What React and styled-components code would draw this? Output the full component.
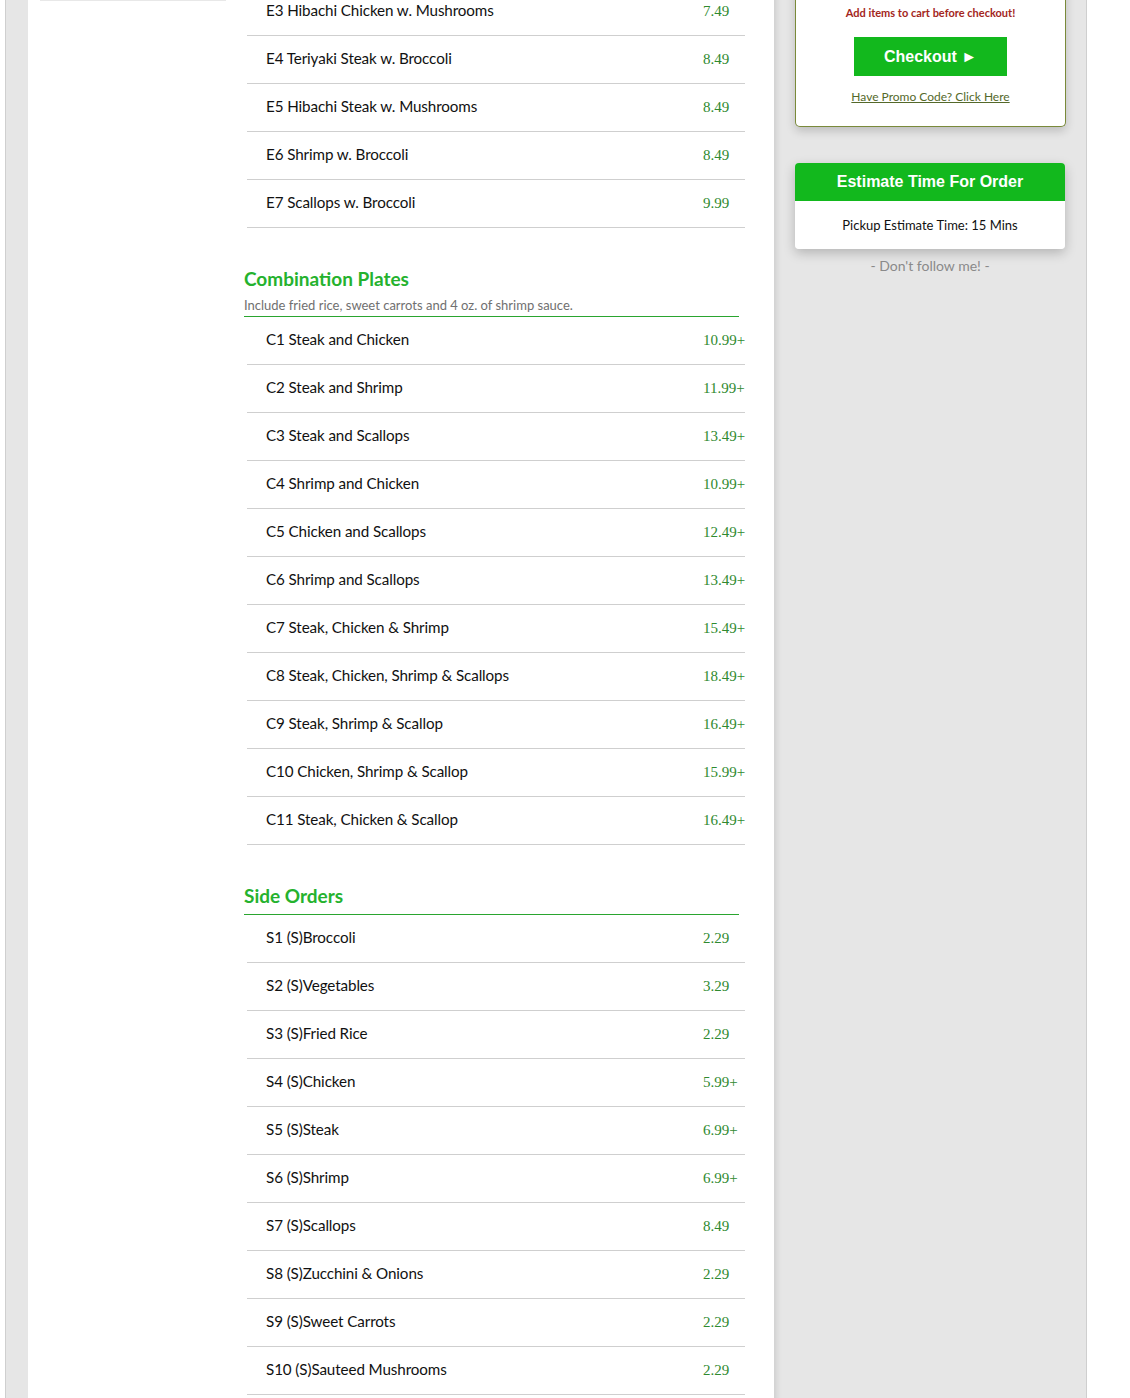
import React from "react";
import styled, { createGlobalStyle } from "styled-components";

const GlobalStyle = createGlobalStyle`
  html, body { margin: 0; padding: 0; background: #fff; }
  body { font-family: "Open Sans", "Liberation Sans", sans-serif; }
`;

const S = {
  Frame: styled.div`
    display: flex;
    width: 1082px;
    margin: -12px 0 0 5px;
    background: #e6e6e6;
    border-left: 1px solid #cfcfcf;
    border-right: 1px solid #cfcfcf;
    padding-left: 22px;
    box-sizing: border-box;
    min-height: 1430px;
  `,
  Main: styled.div`
    display: flex;
    width: 746px;
    background: #fff;
    padding-left: 12px;
    box-sizing: border-box;
  `,
  Sidebar: styled.div`
    width: 186px;
    margin-right: 18px;
  `,
  SideBlock: styled.div`
    height: 11px;
    border-bottom: 2px solid #e8e8e8;
  `,
  Menu: styled.div`
    width: 501px;
  `,
  Section: styled.div`
    margin-top: ${(p) => (p.$first ? "0" : "28px")};
  `,
  Heading: styled.div`
    font-family: "Lato", "Liberation Sans", sans-serif;
    font-weight: 700;
    font-size: 19px;
    color: #25b22e;
    line-height: 26px;
    padding-top: 10px;
  `,
  Note: styled.div`
    font-family: "Lato", "Liberation Sans", sans-serif;
    font-size: 13px;
    color: #707070;
    line-height: 18px;
    margin-top: 4px;
  `,
  Rule: styled.div`
    width: 495px;
    height: 1px;
    background: #2aa52f;
    margin-top: ${(p) => (p.$withNote ? "2px" : "5px")};
  `,
  Row: styled.div`
    display: flex;
    align-items: center;
    height: 47px;
    margin-left: 3px;
    width: 498px;
    border-bottom: 1px solid #cfcfcf;
    box-sizing: content-box;
  `,
  Name: styled.div`
    flex: 1;
    padding-left: 19px;
    padding-bottom: 3px;
    font-family: "Lato", "Liberation Sans", sans-serif;
    font-size: 15.2px;
    color: #111;
    letter-spacing: -0.1px;
  `,
  Price: styled.div`
    width: 42px;
    padding-bottom: 1px;
    font-family: "Liberation Serif", "Times New Roman", serif;
    font-size: 15px;
    color: #2f8a2f;
  `,
  Side: styled.div`
    width: 312px;
    padding-left: 21px;
    box-sizing: border-box;
    box-shadow: inset 6px 0 6px -4px rgba(0, 0, 0, 0.12);
  `,
  CartCard: styled.div`
    width: 271px;
    box-sizing: border-box;
    background: #fff;
    border: 1px solid #7a8a3a;
    border-top: none;
    border-radius: 0 0 5px 5px;
    box-shadow: 0 4px 10px rgba(0, 0, 0, 0.18);
    padding: 17px 0 21px;
    display: flex;
    flex-direction: column;
    align-items: center;
  `,
  Warn: styled.div`
    font-family: "Lato", "Liberation Sans", sans-serif;
    font-size: 11px;
    font-weight: 700;
    color: #a3261c;
    line-height: 16px;
  `,
  CheckoutButton: styled.button`
    margin-top: 16px;
    width: 153px;
    height: 39px;
    border: none;
    background: #12b81d;
    color: #fff;
    font-family: "Liberation Sans", Arial, sans-serif;
    font-weight: 700;
    font-size: 16px;
    cursor: pointer;
  `,
  Promo: styled.a`
    margin-top: 13px;
    font-family: "Lato", "Liberation Sans", sans-serif;
    font-size: 12px;
    color: #54692a;
    text-decoration: underline;
    line-height: 16px;
  `,
  TimeCard: styled.div`
    margin-top: 36px;
    width: 270px;
    border-radius: 4px;
    overflow: hidden;
    box-shadow: 0 4px 12px rgba(0, 0, 0, 0.22);
  `,
  TimeHead: styled.div`
    background: #12b81d;
    color: #fff;
    height: 38px;
    display: flex;
    align-items: center;
    justify-content: center;
    font-family: "Liberation Sans", Arial, sans-serif;
    font-weight: 700;
    font-size: 16px;
  `,
  TimeBody: styled.div`
    background: #fff;
    height: 48px;
    display: flex;
    align-items: center;
    justify-content: center;
    font-family: "Lato", "Liberation Sans", sans-serif;
    font-size: 13px;
    color: #111;
  `,
  Follow: styled.div`
    margin-top: 8px;
    width: 270px;
    text-align: center;
    font-family: "Lato", "Liberation Sans", sans-serif;
    font-size: 14px;
    color: #8a8a8a;
  `,
};

const sections = [
  {
    items: [
      ["E3 Hibachi Chicken w. Mushrooms", "7.49"],
      ["E4 Teriyaki Steak w. Broccoli", "8.49"],
      ["E5 Hibachi Steak w. Mushrooms", "8.49"],
      ["E6 Shrimp w. Broccoli", "8.49"],
      ["E7 Scallops w. Broccoli", "9.99"],
    ],
  },
  {
    title: "Combination Plates",
    note: "Include fried rice, sweet carrots and 4 oz. of shrimp sauce.",
    items: [
      ["C1 Steak and Chicken", "10.99+"],
      ["C2 Steak and Shrimp", "11.99+"],
      ["C3 Steak and Scallops", "13.49+"],
      ["C4 Shrimp and Chicken", "10.99+"],
      ["C5 Chicken and Scallops", "12.49+"],
      ["C6 Shrimp and Scallops", "13.49+"],
      ["C7 Steak, Chicken & Shrimp", "15.49+"],
      ["C8 Steak, Chicken, Shrimp & Scallops", "18.49+"],
      ["C9 Steak, Shrimp & Scallop", "16.49+"],
      ["C10 Chicken, Shrimp & Scallop", "15.99+"],
      ["C11 Steak, Chicken & Scallop", "16.49+"],
    ],
  },
  {
    title: "Side Orders",
    items: [
      ["S1 (S)Broccoli", "2.29"],
      ["S2 (S)Vegetables", "3.29"],
      ["S3 (S)Fried Rice", "2.29"],
      ["S4 (S)Chicken", "5.99+"],
      ["S5 (S)Steak", "6.99+"],
      ["S6 (S)Shrimp", "6.99+"],
      ["S7 (S)Scallops", "8.49"],
      ["S8 (S)Zucchini & Onions", "2.29"],
      ["S9 (S)Sweet Carrots", "2.29"],
      ["S10 (S)Sauteed Mushrooms", "2.29"],
    ],
  },
];

const App = () => {
  return (
    <>
      <GlobalStyle />
      <S.Frame>
        <S.Main>
          <S.Sidebar>
            <S.SideBlock />
          </S.Sidebar>
          <S.Menu>
            {sections.map((sec, i) => (
              <S.Section key={i} $first={i === 0}>
                {sec.title && <S.Heading>{sec.title}</S.Heading>}
                {sec.note && <S.Note>{sec.note}</S.Note>}
                {sec.title && <S.Rule $withNote={!!sec.note} />}
                {sec.items.map(([name, price]) => (
                  <S.Row key={name}>
                    <S.Name>{name}</S.Name>
                    <S.Price>{price}</S.Price>
                  </S.Row>
                ))}
              </S.Section>
            ))}
          </S.Menu>
        </S.Main>
        <S.Side>
          <S.CartCard>
            <S.Warn>Add items to cart before checkout!</S.Warn>
            <S.CheckoutButton>Checkout ►</S.CheckoutButton>
            <S.Promo href="#">Have Promo Code? Click Here</S.Promo>
          </S.CartCard>
          <S.TimeCard>
            <S.TimeHead>Estimate Time For Order</S.TimeHead>
            <S.TimeBody>Pickup Estimate Time: 15 Mins</S.TimeBody>
          </S.TimeCard>
          <S.Follow>- Don't follow me! -</S.Follow>
        </S.Side>
      </S.Frame>
    </>
  );
};

export default App;
